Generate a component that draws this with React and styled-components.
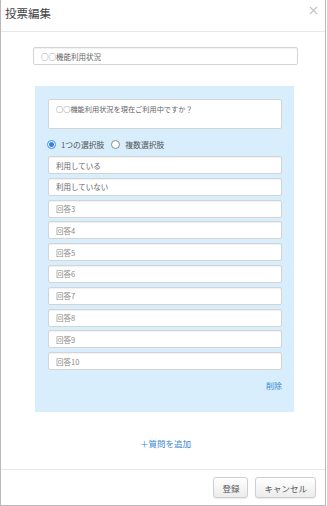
import React from "react";
import styled, { createGlobalStyle } from "styled-components";

const Global = createGlobalStyle`
  html, body { margin: 0; padding: 0; background: #fff; }
  body { font-family: "Noto Sans CJK JP", "Noto Sans", sans-serif; }
  * { box-sizing: border-box; }
`;

const Dialog = styled.div`
  width: 326px;
  height: 506px;
  border: 1px solid #b9b9b9;
  border-top: none;
  display: flex;
  flex-direction: column;
  background: #fff;
`;

const Header = styled.div`
  height: 32px;
  flex: none;
  display: flex;
  align-items: flex-start;
  justify-content: space-between;
  border-bottom: 1px solid #e8e8e8;
  padding: 5px 6px 0 4px;
`;

const Title = styled.div`
  font-size: 11.5px;
  line-height: 16px;
  color: #444;
`;

const Close = styled.button`
  border: none;
  background: none;
  padding: 0;
  margin-top: 1px;
  width: 10px;
  height: 10px;
  display: flex;
  cursor: pointer;
`;

const Body = styled.div`
  flex: 1;
  padding: 15px 0 0 32px;
  display: flex;
  flex-direction: column;
`;

const TextField = styled.input`
  display: block;
  width: ${(p) => p.$w || "100%"};
  height: 18px;
  border: 1px solid #d4d4d4;
  border-radius: 2px;
  box-shadow: inset 0 1px 1px rgba(0, 0, 0, 0.06);
  background: #fff;
  padding: 0 7px;
  font-family: inherit;
  font-size: 7.5px;
  color: #666;
  outline: none;
  &::placeholder { color: #8a8a8a; }
`;

const Panel = styled.div`
  margin: 21px 0 0 2px;
  width: 259px;
  background: #d8eefd;
  padding: 13px 12px 0 13px;
  height: 326px;
  display: flex;
  flex-direction: column;
`;

const Question = styled.textarea`
  display: block;
  width: 100%;
  height: 30px;
  resize: none;
  border: 1px solid #d4d4d4;
  border-radius: 2px;
  background: #fff;
  padding: 4px 7px;
  font-family: inherit;
  font-size: 7.2px;
  line-height: 11px;
  color: #666;
  outline: none;
`;

const RadioRow = styled.div`
  display: flex;
  align-items: center;
  height: 20px;
  margin: 5px 0 2px;
  gap: 7px;
`;

const RadioLabel = styled.label`
  display: flex;
  align-items: center;
  gap: 5px;
  font-size: 7.8px;
  color: #555;
`;

const RadioDot = styled.span`
  width: 9px;
  height: 9px;
  border-radius: 50%;
  border: 1px solid ${(p) => (p.$on ? "#3b8eea" : "#8d8d8d")};
  background: #fff;
  display: flex;
  align-items: center;
  justify-content: center;
  margin-left: ${(p) => (p.$first ? "-1px" : "0")};
  &::after {
    content: "";
    width: 5px;
    height: 5px;
    border-radius: 50%;
    background: ${(p) => (p.$on ? "#2f83e6" : "transparent")};
  }
`;

const Answers = styled.div`
  display: flex;
  flex-direction: column;
  gap: 3.8px;
`;

const DeleteRow = styled.div`
  display: flex;
  justify-content: flex-end;
  margin-top: 10px;
`;

const Link = styled.a`
  font-size: ${(p) => p.$fs || 8}px;
  color: #3a88d2;
  text-decoration: none;
  cursor: pointer;
  line-height: 12px;
`;

const AddRow = styled.div`
  width: 265px;
  display: flex;
  justify-content: center;
  margin-top: 25px;
`;

const Footer = styled.div`
  height: 36px;
  flex: none;
  border-top: 1px solid #e8e8e8;
  display: flex;
  justify-content: flex-end;
  align-items: center;
  gap: 7px;
  padding-right: 9px;
`;

const Button = styled.button`
  height: 21px;
  padding: 0 8px;
  border: 1px solid #cfcfcf;
  border-radius: 3px;
  background: linear-gradient(#ffffff, #ececec);
  box-shadow: 0 1px 1px rgba(0, 0, 0, 0.08);
  font-family: inherit;
  font-size: 8.5px;
  color: #555;
  cursor: pointer;
`;

const answers = [
  { v: "利用している" },
  { v: "利用していない" },
  { p: "回答3" },
  { p: "回答4" },
  { p: "回答5" },
  { p: "回答6" },
  { p: "回答7" },
  { p: "回答8" },
  { p: "回答9" },
  { p: "回答10" },
];

export default function App() {
  return (
    <>
      <Global />
      <Dialog>
        <Header>
          <Title>投票編集</Title>
          <Close aria-label="close">
            <svg width="9" height="9" viewBox="0 0 9 9">
              <path d="M1 1L8 8M8 1L1 8" stroke="#c4c4c4" strokeWidth="1.2" />
            </svg>
          </Close>
        </Header>
        <Body>
          <TextField $w="265px" defaultValue="○○機能利用状況" />
          <Panel>
            <Question defaultValue="○○機能利用状況を現在ご利用中ですか？" />
            <RadioRow>
              <RadioLabel>
                <RadioDot $on $first />
                1つの選択肢
              </RadioLabel>
              <RadioLabel>
                <RadioDot />
                複数選択肢
              </RadioLabel>
            </RadioRow>
            <Answers>
              {answers.map((a, i) => (
                <TextField key={i} defaultValue={a.v} placeholder={a.p} />
              ))}
            </Answers>
            <DeleteRow>
              <Link>削除</Link>
            </DeleteRow>
          </Panel>
          <AddRow>
            <Link $fs={8.5}>＋質問を追加</Link>
          </AddRow>
        </Body>
        <Footer>
          <Button>登録</Button>
          <Button>キャンセル</Button>
        </Footer>
      </Dialog>
    </>
  );
}
